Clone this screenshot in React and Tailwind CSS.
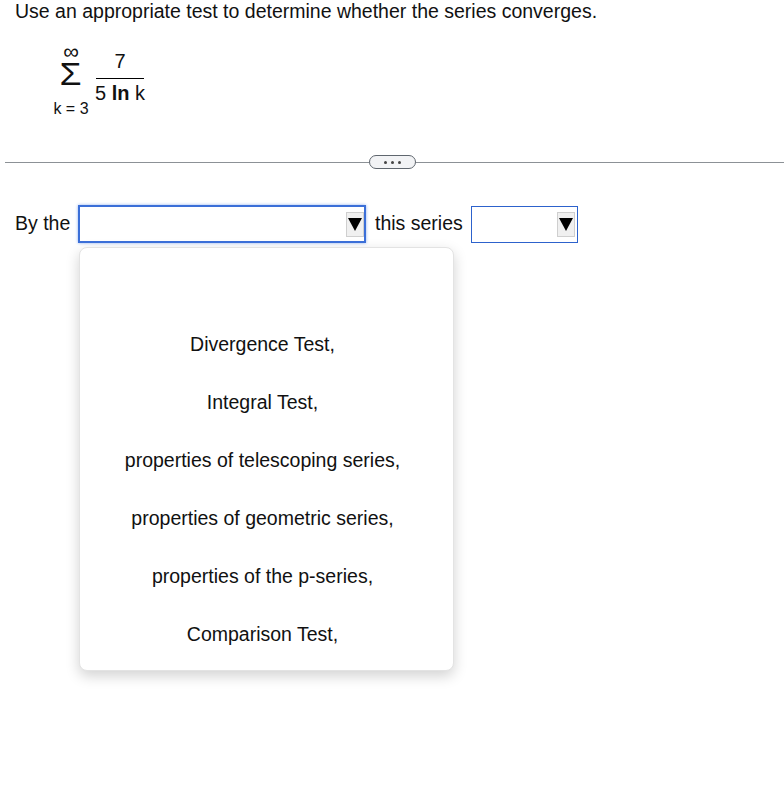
export default function App() {
  const items = [
    "Divergence Test,",
    "Integral Test,",
    "properties of telescoping series,",
    "properties of geometric series,",
    "properties of the p-series,",
    "Comparison Test,",
  ];
  const Arrow = () => (
    <div className="w-[18px] h-[25px] bg-[#f0f0f0] border border-[#cfcfcf] flex items-center justify-center">
      <svg width="14" height="13" viewBox="0 0 14 13">
        <polygon points="0,0 14,0 7,13" fill="#000" />
      </svg>
    </div>
  );
  return (
    <div className="w-[784px] h-[787px] bg-white text-[#111] text-[19.5px]" style={{ fontFamily: "'Liberation Sans', Arial, sans-serif" }}>
      <div className="pl-[15px] h-[22px] leading-[22px] whitespace-nowrap">
        Use an appropriate test to determine whether the series converges.
      </div>
      <div className="flex items-start pl-[53px] h-[133px]">
        <div className="flex flex-col items-center w-[36px] mt-[22px]">
          <div className="text-[22px] leading-[16px] h-[16px]">∞</div>
          <div className="text-[31px] leading-[26px] h-[26px] mt-[2px] scale-x-115">Σ</div>
          <div className="text-[16px] leading-[18px] mt-[12px] whitespace-nowrap">k = 3</div>
        </div>
        <div className="flex flex-col items-center ml-[7px] mt-[28px] w-[48px]">
          <div className="text-[20px] leading-[22px]">7</div>
          <div className="h-[1px] w-[48px] bg-black mt-[6px]" />
          <div className="text-[20px] leading-[22px] mt-[3px] whitespace-nowrap">5 <b>ln</b> k</div>
        </div>
      </div>
      <div className="flex items-center pl-[5px] h-[14px]">
        <div className="h-[1px] bg-[#8c9196] w-[364px]" />
        <div className="w-[47px] h-[14px] rounded-full border border-[#5f666e] bg-[#f2f3f5] flex items-center justify-center gap-[4px]">
          <span className="w-[3px] h-[3px] rounded-full bg-[#444]" />
          <span className="w-[3px] h-[3px] rounded-full bg-[#444]" />
          <span className="w-[3px] h-[3px] rounded-full bg-[#444]" />
        </div>
        <div className="h-[1px] bg-[#8c9196] flex-1" />
      </div>
      <div className="flex items-center pl-[15px] mt-[36px] h-[38px]">
        <span className="w-[63px] whitespace-nowrap">By the</span>
        <div className="w-[288px] h-[38px] border-2 border-[#3b6fd8] shadow-[0_0_3px_#8fb0f0] flex items-center justify-end">
          <Arrow />
        </div>
        <span className="ml-[9px] w-[96px] whitespace-nowrap">this series</span>
        <div className="w-[107px] h-[37px] border border-[#2d62cc] flex items-center justify-end pr-[2px]">
          <Arrow />
        </div>
      </div>
      <div className="ml-[79px] mt-[4px] w-[375px] h-[424px] bg-white rounded-[8px] border border-[#e3e3e3] shadow-[0_5px_14px_rgba(0,0,0,0.18)] flex flex-col items-center pt-[85px] pr-[8px] gap-[36px]">
        {items.map((t) => (
          <div key={t} className="leading-[22px] whitespace-nowrap">{t}</div>
        ))}
      </div>
    </div>
  );
}
